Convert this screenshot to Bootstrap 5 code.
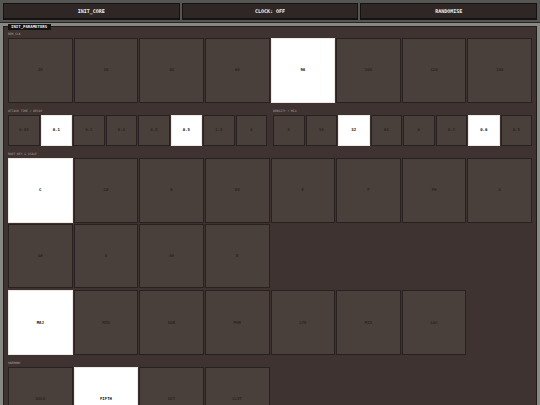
<!DOCTYPE html>
<html lang="en">
<head>
<meta charset="utf-8">
<meta name="viewport" content="width=device-width, initial-scale=1">
<title>INIT_CORE</title>
<link href="https://cdn.jsdelivr.net/npm/bootstrap@5.3.0/dist/css/bootstrap.min.css" rel="stylesheet">
<style>
body{background:#888885;font-family:"DejaVu Sans Mono","Liberation Mono",monospace;line-height:1}
.topbar{background:#555554;border-bottom:1px solid #242424;padding:3px;gap:2px}
.tool{height:16px;padding:0;background:#2e2725;color:#f4f0eb;border:1px solid #151211;font-size:5px;font-weight:700;line-height:12px;box-shadow:0 1px 0 #151211}
.panel{margin:3px 3px 0;padding:5px 4px;background:#3f3331;border:1px solid #211d1c}
.tag{position:absolute;left:4px;top:-3px;background:#151311;color:#eee;font-size:4px;font-weight:700;line-height:6px;padding:0 4px 0 3px}
.caption{font-size:3px;line-height:4px;color:#aaa09b;margin:0 0 2px;white-space:nowrap}
.pads{display:grid;grid-template-columns:repeat(8,minmax(0,1fr));gap:1px}
.pad{aspect-ratio:1;padding:0;border:1px solid #29211f;border-radius:0;background:#4a403b;color:#2c2421;font-size:4px;line-height:1;font-weight:700}
.pad[aria-pressed="true"]{background:#fff;border-color:#eee7e3;color:#111}
.block{margin-bottom:6px}
.stack{display:grid;gap:2px}
.pair{gap:6px}
</style>
<script src="https://cdn.jsdelivr.net/npm/bootstrap@5.3.0/dist/js/bootstrap.bundle.min.js"></script>
</head>
<body class="overflow-hidden vh-100">
<header class="topbar d-flex">
<button type="button" class="btn tool rounded-0 flex-fill w-100">INIT_CORE</button>
<button type="button" class="btn tool rounded-0 flex-fill w-100">CLOCK: OFF</button>
<button type="button" class="btn tool rounded-0 flex-fill w-100">RANDOMISE</button>
</header>
<main class="panel position-relative">
<h1 class="tag m-0">INIT_PARAMETERS</h1>
<section class="block" aria-labelledby="bpm"><h2 class="caption" id="bpm">BPM_CLK</h2><div class="pads" data-pads="20,30,40,60,*90,100,120,160"></div></section>
<div class="d-flex block pair">
<section class="col" aria-labelledby="att"><h2 class="caption" id="att">ATTACK TIME / DECAY</h2><div class="pads" data-pads="0.05,*0.1,0.2,0.4,0.3,*0.5,1.5,4"></div></section>
<section class="col" aria-labelledby="den"><h2 class="caption" id="den">DENSITY / MIX</h2><div class="pads" data-pads="8,16,*32,64,0,0.3,*0.6,0.9"></div></section>
</div>
<section class="block" aria-labelledby="key"><h2 class="caption" id="key">ROOT_KEY &amp; SCALE</h2>
<div class="stack">
<div class="pads" data-pads="*C,C#,D,D#,E,F,F#,G,G#,A,A#,B"></div>
<div class="pads" data-pads="*MAJ,MIN,DOR,PHR,LYD,MIX,LOC"></div>
</div></section>
<section class="block" aria-labelledby="har"><h2 class="caption" id="har">HARMONY</h2><div class="pads" data-pads="SOLO,*FIFTH,OCT,CLST"></div></section>
</main>
<script>
document.querySelectorAll('[data-pads]').forEach(group => {
  group.dataset.pads.split(',').forEach(value => {
    const pad = document.createElement('button');
    pad.type = 'button';
    pad.className = 'btn pad';
    pad.setAttribute('aria-pressed', value.startsWith('*'));
    pad.textContent = value.replace('*', '');
    group.append(pad);
  });
});
</script>
</body>
</html>
